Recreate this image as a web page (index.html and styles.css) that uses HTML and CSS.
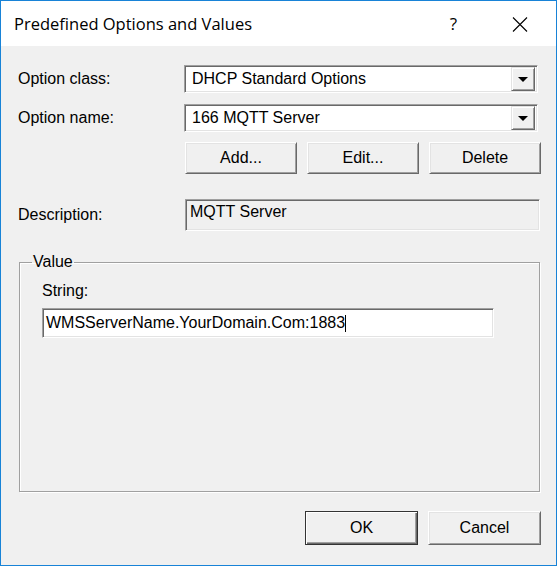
FILE: index.html
```html
<!DOCTYPE html>
<html lang="en">
<head>
    <meta charset="UTF-8">
    <title>Predefined Options and Values</title>
    <link rel="stylesheet" href="styles.css">
</head>
<body>
    <div class="window">
        <div class="titlebar">
            <span class="title">Predefined Options and Values</span>
            <span class="help">?</span>
            <svg class="close" width="16" height="15" viewBox="0 0 16 15">
                <path d="M1 0.5 L15 14.5 M15 0.5 L1 14.5" stroke="#000" stroke-width="1.1" fill="none"/>
            </svg>
        </div>

        <div class="dialog">
            <div class="row first">
                <label class="label">Option class:</label>
                <div class="combo">
                    <span class="combo-text">DHCP Standard Options</span>
                    <span class="combo-btn"><i class="arrow"></i></span>
                </div>
            </div>
            <div class="row second">
                <label class="label">Option name:</label>
                <div class="combo">
                    <span class="combo-text">166 MQTT Server</span>
                    <span class="combo-btn"><i class="arrow"></i></span>
                </div>
            </div>
            <div class="row actions">
                <span class="label"></span>
                <div class="btn-row">
                    <button class="btn">Add...</button>
                    <button class="btn">Edit...</button>
                    <button class="btn">Delete</button>
                </div>
            </div>
            <div class="row desc">
                <label class="label">Description:</label>
                <div class="field readonly">MQTT Server</div>
            </div>

            <fieldset class="group">
                <legend>Value</legend>
                <div class="group-body">
                    <label class="string-label">String:</label>
                    <div class="field edit">WMSServerName.YourDomain.Com:1883<span class="caret"></span></div>
                </div>
            </fieldset>

            <div class="footer">
                <button class="btn wide default">OK</button>
                <button class="btn wide">Cancel</button>
            </div>
        </div>
    </div>
</body>
</html>
```

FILE: styles.css
```css
/* classic win dialog look */
body {
    margin: 0;
    font-family: "Liberation Sans", Arial, sans-serif;
    font-size: 16px;
    color: #000;
    background: #fff;
}

.window {
    width: 557px;
    height: 566px;
    box-sizing: border-box;
    border: 1px solid #1883d7; /* accent border */
    display: flex;
    flex-direction: column;
}

.titlebar {
    height: 45px;
    background: #fff;
    display: flex;
    align-items: center;
    padding-left: 13px;
}

.title {
    font-family: "Open Sans", "Noto Sans", sans-serif;
    font-size: 16.5px;
}

.help {
    margin-left: auto;
    font-family: "Open Sans", sans-serif;
    font-size: 17px;
    color: #000;
    margin-right: 55px;
}

.close {
    margin-right: 28px;
    margin-top: 1px;
}

.dialog {
    flex: 1;
    background: #f0f0f0;
    padding: 19px 15px 0 17px;
}

.row {
    display: flex;
    align-items: center;
}

.row.second {
    margin-top: 11px;
}

.row.actions {
    margin-top: 10px;
}

.row.desc {
    margin-top: 25px;
}

.label {
    width: 166px;
    line-height: 18px;
}

/* sunken 3d box */
.combo, .field {
    box-sizing: border-box;
    border: 1px solid;
    border-color: #a0a0a0 #fff #fff #a0a0a0;
    box-shadow: inset 1px 1px #696969, inset -1px -1px #e3e3e3;
}

.combo {
    width: 354px;
    height: 28px;
    background: #fff;
    display: flex;
    align-items: center;
    padding: 2px;
}

.combo-text {
    flex: 1;
    padding-left: 5px;
}

.combo-btn {
    width: 24px;
    height: 24px;
    box-sizing: border-box;
    background: #f0f0f0;
    border: 1px solid;
    border-color: #e3e3e3 #696969 #696969 #e3e3e3;
    box-shadow: inset 1px 1px #fff, inset -1px -1px #a0a0a0;
    display: flex;
    align-items: center;
    justify-content: center;
}

.arrow {
    width: 0;
    height: 0;
    border-left: 5px solid transparent;
    border-right: 5px solid transparent;
    border-top: 5px solid #000;
    margin-top: 1px;
}

.btn-row {
    display: flex;
    gap: 10px;
    margin-left: 1px;
}

.btn {
    width: 112px;
    height: 32px;
    box-sizing: border-box;
    font-family: "Liberation Sans", Arial, sans-serif;
    font-size: 16px;
    color: #000;
    background: #f0f0f0;
    border: 1px solid;
    border-color: #fff #696969 #696969 #fff;
    box-shadow: inset 1px 1px #e3e3e3, inset -1px -1px #a0a0a0;
    padding: 0;
}

.field {
    width: 355px;
    height: 32px;
    padding: 3px 4px;
    line-height: 18px;
    margin-left: 1px;
}

.field.readonly {
    background: #f0f0f0;
}

.group {
    margin: 22px 0 0 1px;
    width: 521px;
    height: 239px;
    box-sizing: border-box;
    padding: 0 12px;
    border: 1px solid #a0a0a0;
    box-shadow: inset 1px 1px #fff, 1px 1px #fff;
    min-inline-size: 0;
}

.group legend {
    padding: 0 1px;
    line-height: 18px;
}

.group-body {
    padding: 11px 0 0 10px;
}

.string-label {
    display: block;
    line-height: 18px;
}

.field.edit {
    width: 452px;
    height: 30px;
    margin: 8px 0 0 0;
    background: #fff;
    padding: 5px 3px;
    line-height: 18px;
    display: flex;
    align-items: center;
}

.caret {
    display: inline-block;
    width: 1px;
    height: 17px;
    background: #000;
}

.footer {
    display: flex;
    justify-content: flex-end;
    gap: 10px;
    margin-top: 19px;
}

.btn.wide {
    width: 113px;
    height: 34px;
}

.btn.default {
    border-color: #333;
    box-shadow: inset 1px 1px #fff, inset -1px -1px #696969, inset -2px -2px #a0a0a0;
}
```
